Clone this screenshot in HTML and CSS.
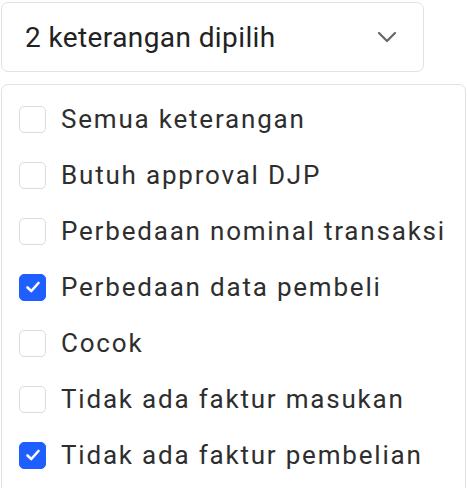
FILE: index.html
```html
<!DOCTYPE html>
<html>
<head>
<meta charset="utf-8">
<link rel="stylesheet" href="styles.css">
</head>
<body>
<div class="page">
  <div class="select">
    <span class="select-label">2 keterangan dipilih</span>
    <svg class="chevron" width="20" height="12" viewBox="0 0 20 12"><path d="M2 2 L10 10 L18 2" fill="none" stroke="#666" stroke-width="2.2" stroke-linecap="round" stroke-linejoin="round"/></svg>
  </div>
  <div class="menu">
    <div class="item"><span class="box"></span><span class="label">Semua keterangan</span></div>
    <div class="item"><span class="box"></span><span class="label">Butuh approval DJP</span></div>
    <div class="item"><span class="box"></span><span class="label">Perbedaan nominal transaksi</span></div>
    <div class="item"><span class="box checked"><svg width="16" height="14" viewBox="0 0 16 14"><path d="M2.5 7.5 L6.3 11 L13.5 3" fill="none" stroke="#fff" stroke-width="2.6" stroke-linecap="round" stroke-linejoin="round"/></svg></span><span class="label">Perbedaan data pembeli</span></div>
    <div class="item"><span class="box"></span><span class="label">Cocok</span></div>
    <div class="item"><span class="box"></span><span class="label">Tidak ada faktur masukan</span></div>
    <div class="item"><span class="box checked"><svg width="16" height="14" viewBox="0 0 16 14"><path d="M2.5 7.5 L6.3 11 L13.5 3" fill="none" stroke="#fff" stroke-width="2.6" stroke-linecap="round" stroke-linejoin="round"/></svg></span><span class="label">Tidak ada faktur pembelian</span></div>
  </div>
</div>
</body>
</html>
```
FILE: styles.css
```css
html, body {
  margin: 0;
  padding: 0;
  background: #fff;
}
body {
  font-family: Roboto, "Noto Sans", sans-serif;
  color: #2b2b2b;
}
.page {
  padding: 2px 1px 0 1px;
  display: flex;
  flex-direction: column;
  gap: 12px;
}
.select {
  width: 423px;
  height: 70px;
  box-sizing: border-box;
  border: 1.5px solid #e2e2e2;
  border-radius: 7px;
  display: flex;
  align-items: center;
  justify-content: space-between;
  padding: 0 26px 0 23px;
}
.select-label {
  font-size: 28px;
  letter-spacing: 0.4px;
  color: #222;
}
.chevron { display: block; }
.menu {
  width: 465px;
  box-sizing: border-box;
  border: 1.5px solid #e2e2e2;
  border-radius: 7px;
  padding: 6px 0 0 17px;
  height: 420px;
}
.item {
  display: flex;
  align-items: center;
  height: 56px;
  gap: 15px;
}
.box {
  width: 27px;
  height: 27px;
  box-sizing: border-box;
  border: 1.5px solid #dcdcdc;
  border-radius: 5px;
  display: flex;
  align-items: center;
  justify-content: center;
  flex: none;
}
.box.checked {
  background: #1f5eff;
  border-color: #1f5eff;
}
.label {
  font-size: 26px;
  letter-spacing: 1.8px;
  color: #2e2e2e;
}
```
